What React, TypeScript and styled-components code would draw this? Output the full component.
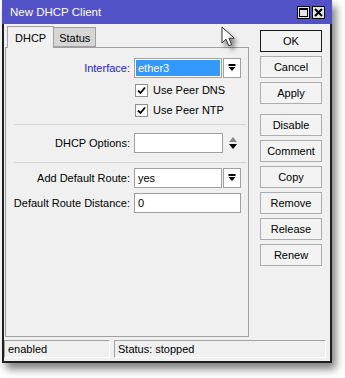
import React from 'react';
import styled, { createGlobalStyle } from 'styled-components';

const GlobalStyle = createGlobalStyle`
  html, body {
    margin: 0;
    padding: 0;
    background: #ffffff;
  }
  body {
    font-family: "Liberation Sans", Arial, sans-serif;
    font-size: 11px;
    color: #000;
  }
`;

const Page = styled.div`
  width: 345px;
  height: 378px;
  padding-left: 2px;
  box-sizing: border-box;
  position: relative;
  overflow: hidden;
`;

const Window = styled.div`
  width: 330px;
  box-sizing: border-box;
  border: 2px solid #202020;
  border-top: none;
  background: #f0f0f0;
  display: flex;
  flex-direction: column;
  box-shadow: 4px 6px 8px rgba(0, 0, 0, 0.5);
`;

const TitleBar = styled.div`
  height: 24px;
  margin: 0 -2px;
  padding: 0 7px 0 8px;
  background: #5252c6;
  display: flex;
  align-items: center;
  justify-content: space-between;
  color: #fff;
  font-size: 11.5px;
`;

const TitleButtons = styled.div`
  display: flex;
  gap: 2px;
  margin-top: 1px;
`;

const TitleButton = styled.div`
  width: 13px;
  height: 13px;
  box-sizing: border-box;
  border: 1px solid #000;
  background: #e4e4e4;
  display: flex;
  align-items: center;
  justify-content: center;
`;

const Main = styled.div`
  display: flex;
  padding-left: 1px;
`;

const LeftColumn = styled.div`
  width: 244px;
  display: flex;
  flex-direction: column;
  padding-top: 2px;
`;

const TabStrip = styled.div`
  display: flex;
  align-items: flex-end;
  padding-left: 2px;
  height: 22px;
  margin-bottom: -1px;
  position: relative;
  z-index: 1;
`;

const Tab = styled.div<{ $active?: boolean }>`
  box-sizing: border-box;
  height: ${(p) => (p.$active ? '22px' : '20px')};
  padding: 0 ${(p) => (p.$active ? '7px' : '5px')};
  margin-bottom: ${(p) => (p.$active ? '0' : '1px')};
  border: 1px solid #a0a0a0;
  border-bottom: ${(p) => (p.$active ? 'none' : '1px solid #a0a0a0')};
  border-left: ${(p) => (p.$active ? '1px solid #a0a0a0' : 'none')};
  background: ${(p) => (p.$active ? '#f0f0f0' : '#d6d6d6')};
  display: flex;
  align-items: center;
  padding-top: ${(p) => (p.$active ? '0' : '2px')};
  font-size: 11px;
`;

const Panel = styled.div`
  height: 290px;
  box-sizing: border-box;
  border: 1px solid #a0a0a0;
  padding-top: 10px;
  display: flex;
  flex-direction: column;
`;

const FieldRow = styled.div<{ $gap?: number }>`
  display: grid;
  grid-template-columns: 124px 1fr;
  column-gap: 4px;
  height: 20px;
  align-items: center;
  margin-top: ${(p) => p.$gap ?? 0}px;
`;

const Label = styled.div<{ $accent?: boolean }>`
  text-align: right;
  color: ${(p) => (p.$accent ? '#2222cc' : '#000')};
  white-space: nowrap;
`;

const Controls = styled.div`
  display: flex;
  align-items: center;
  height: 20px;
`;

const Input = styled.div<{ $width: number }>`
  width: ${(p) => p.$width}px;
  height: 20px;
  box-sizing: border-box;
  border: 1px solid #a0a0a0;
  background: #fff;
  padding: 1px;
  display: flex;
`;

const InputText = styled.div<{ $selected?: boolean }>`
  flex: 1;
  display: flex;
  align-items: center;
  padding-left: 2px;
  background: ${(p) => (p.$selected ? '#3399ff' : 'transparent')};
  color: ${(p) => (p.$selected ? '#fff' : '#000')};
`;

const DropButton = styled.div`
  width: 18px;
  height: 20px;
  margin-left: 1px;
  box-sizing: border-box;
  border: 1px solid #a0a0a0;
  background: #fff;
  display: flex;
  align-items: center;
  justify-content: center;
`;

const Spinner = styled.div`
  margin-left: 5px;
  width: 10px;
  display: flex;
  align-items: center;
  justify-content: center;
`;

const CheckRow = styled.label`
  display: flex;
  align-items: center;
  height: 20px;
  gap: 5px;
  margin-left: 1px;
`;

const CheckBox = styled.span`
  width: 13px;
  height: 13px;
  box-sizing: border-box;
  border: 1px solid #8e8f8f;
  background: #fff;
  display: flex;
  align-items: center;
  justify-content: center;
`;

const Separator = styled.div<{ $gap: number }>`
  height: 1px;
  background: #d6d6d6;
  margin: ${(p) => p.$gap}px 2px 0 8px;
`;

const ButtonColumn = styled.div`
  margin-left: 11px;
  padding-top: 6px;
  display: flex;
  flex-direction: column;
  gap: 4px;
`;

const ActionButton = styled.div<{ $primary?: boolean; $spaced?: boolean }>`
  width: 62px;
  height: 22px;
  box-sizing: border-box;
  border: 1px solid ${(p) => (p.$primary ? '#1a1a1a' : '#adadad')};
  background: #f3f3f3;
  display: flex;
  align-items: center;
  justify-content: center;
  margin-top: ${(p) => (p.$spaced ? '6px' : '0')};
  font-size: 11px;
`;

const StatusBar = styled.div`
  display: flex;
  gap: 4px;
  margin-top: 3px;
  padding-bottom: 3px;
  padding-right: 4px;
`;

const StatusCell = styled.div<{ $width?: number }>`
  height: 18px;
  box-sizing: border-box;
  border-top: 1px solid #a0a0a0;
  border-left: 1px solid #a0a0a0;
  border-right: 1px solid #fff;
  border-bottom: 1px solid #fff;
  display: flex;
  align-items: center;
  padding-left: 3px;
  flex: ${(p) => (p.$width ? `0 0 ${p.$width}px` : '1')};
`;

const Cursor = styled.svg`
  position: absolute;
  left: 221px;
  top: 26px;
  filter: drop-shadow(3px 4px 2px rgba(0, 0, 0, 0.45));
`;

const DropIcon = () => (
  <svg width="8" height="8" viewBox="0 0 8 8">
    <rect x="0.5" y="0" width="7" height="2" fill="#000" />
    <polygon points="0.5,3 7.5,3 4,7" fill="#000" />
  </svg>
);

const SpinIcon = () => (
  <svg width="10" height="14" viewBox="0 0 10 14">
    <polygon points="1,6 9,6 5,1" fill="#8a8a8a" />
    <polygon points="1,8 9,8 5,13" fill="#000" />
  </svg>
);

const CheckMark = () => (
  <svg width="9" height="9" viewBox="0 0 9 9">
    <polyline points="1,4.5 3.5,7 8,1.5" fill="none" stroke="#000" strokeWidth="1.8" />
  </svg>
);

const buttons = ['OK', 'Cancel', 'Apply', 'Disable', 'Comment', 'Copy', 'Remove', 'Release', 'Renew'];

export default function App() {
  return (
    <>
      <GlobalStyle />
      <Page>
        <Window>
          <TitleBar>
            <span>New DHCP Client</span>
            <TitleButtons>
              <TitleButton>
                <svg width="9" height="9" viewBox="0 0 9 9">
                  <rect x="0.5" y="0.5" width="8" height="8" fill="none" stroke="#000" />
                  <rect x="0" y="0" width="9" height="2" fill="#000" />
                </svg>
              </TitleButton>
              <TitleButton>
                <svg width="9" height="9" viewBox="0 0 9 9">
                  <path d="M1 1 L8 8 M8 1 L1 8" stroke="#000" strokeWidth="2" />
                </svg>
              </TitleButton>
            </TitleButtons>
          </TitleBar>
          <Main>
            <LeftColumn>
              <TabStrip>
                <Tab $active>DHCP</Tab>
                <Tab>Status</Tab>
              </TabStrip>
              <Panel>
                <FieldRow>
                  <Label $accent>Interface:</Label>
                  <Controls>
                    <Input $width={88}>
                      <InputText $selected>ether3</InputText>
                    </Input>
                    <DropButton>
                      <DropIcon />
                    </DropButton>
                  </Controls>
                </FieldRow>
                <FieldRow $gap={2}>
                  <span />
                  <CheckRow>
                    <CheckBox>
                      <CheckMark />
                    </CheckBox>
                    Use Peer DNS
                  </CheckRow>
                </FieldRow>
                <FieldRow>
                  <span />
                  <CheckRow>
                    <CheckBox>
                      <CheckMark />
                    </CheckBox>
                    Use Peer NTP
                  </CheckRow>
                </FieldRow>
                <Separator $gap={4} />
                <FieldRow $gap={8}>
                  <Label>DHCP Options:</Label>
                  <Controls>
                    <Input $width={89}>
                      <InputText />
                    </Input>
                    <Spinner>
                      <SpinIcon />
                    </Spinner>
                  </Controls>
                </FieldRow>
                <Separator $gap={9} />
                <FieldRow $gap={5}>
                  <Label>Add Default Route:</Label>
                  <Controls>
                    <Input $width={88}>
                      <InputText>yes</InputText>
                    </Input>
                    <DropButton>
                      <DropIcon />
                    </DropButton>
                  </Controls>
                </FieldRow>
                <FieldRow $gap={5}>
                  <Label>Default Route Distance:</Label>
                  <Controls>
                    <Input $width={107}>
                      <InputText>0</InputText>
                    </Input>
                  </Controls>
                </FieldRow>
              </Panel>
            </LeftColumn>
            <ButtonColumn>
              {buttons.map((b) => (
                <ActionButton key={b} $primary={b === 'OK'} $spaced={b === 'Disable'}>
                  {b}
                </ActionButton>
              ))}
            </ButtonColumn>
          </Main>
          <StatusBar>
            <StatusCell $width={106}>enabled</StatusCell>
            <StatusCell>Status: stopped</StatusCell>
          </StatusBar>
        </Window>
        <Cursor width="16" height="22" viewBox="0 0 16 22">
          <path
            d="M1 1 L1 17 L5 13.2 L7.8 19.8 L10.6 18.6 L7.9 12.2 L13.2 12.2 Z"
            fill="#fff"
            stroke="#333"
            strokeWidth="1"
            strokeLinejoin="round"
          />
        </Cursor>
      </Page>
    </>
  );
}
